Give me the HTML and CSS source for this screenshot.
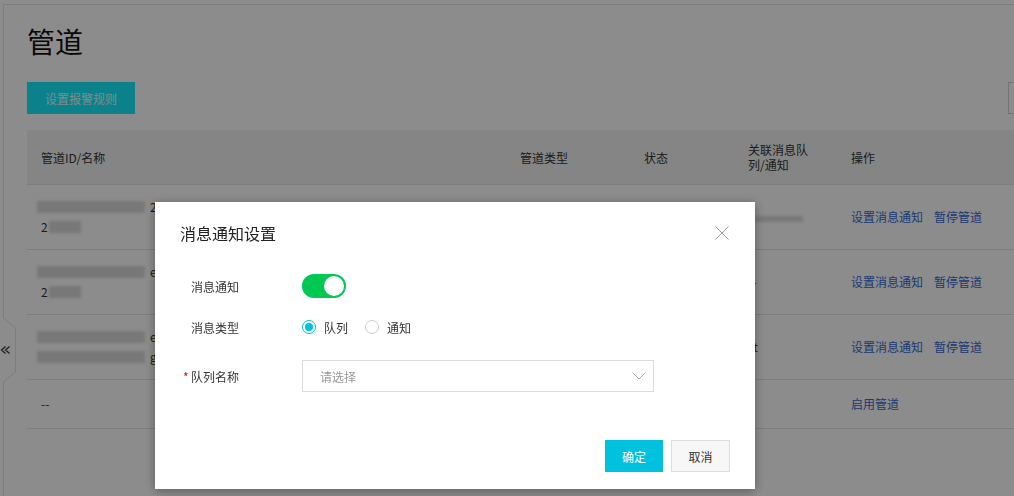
FILE: index.html
```html
<!DOCTYPE html>
<html lang="zh-CN">
<head>
  <meta charset="UTF-8" />
  <title>管道</title>
  <meta name="viewport" content="width=device-width, initial-scale=1.0" />
  <link rel="stylesheet" href="styles.css">
</head>
<body>
<div class="page">
  <svg class="collapse-tab" width="16" height="64" viewBox="0 0 16 64">
    <path d="M0 0 L3.5 0 L15.5 10 L15.5 54 L3.5 64 L0 64 Z" fill="#fff"/>
    <path d="M3.5 0 L15.5 10 L15.5 54 L3.5 64" fill="none" stroke="#e3e3e3"/>
    <path d="M5.5 28.5 L1.5 32 L5.5 35.5 M9.5 28.5 L5.5 32 L9.5 35.5" fill="none" stroke="#333" stroke-width="1.2"/>
  </svg>

  <div class="main">
    <h1 class="title">管道</h1>
    <div class="toolbar">
      <button class="btn btn-primary">设置报警规则</button>
      <button class="btn btn-ghost"></button>
    </div>

    <table class="grid">
      <colgroup>
        <col class="c-name">
        <col class="c-type">
        <col class="c-state">
        <col class="c-queue">
        <col class="c-ops">
      </colgroup>
      <thead>
        <tr>
          <th>管道ID/名称</th>
          <th>管道类型</th>
          <th>状态</th>
          <th class="th-wrap">关联消息队列/通知</th>
          <th>操作</th>
        </tr>
      </thead>
      <tbody>
        <tr class="tall">
          <td>
            <div class="line"><span class="smudge s-long"></span><span class="peek">2</span></div>
            <div class="line"><span>2</span><span class="smudge s-short"></span></div>
          </td>
          <td></td>
          <td></td>
          <td><span class="smudge s-queue"></span></td>
          <td><a class="op">设置消息通知</a><a class="op">暂停管道</a></td>
        </tr>
        <tr class="tall">
          <td>
            <div class="line"><span class="smudge s-long"></span><span class="peek">ef</span></div>
            <div class="line"><span>2</span><span class="smudge s-short"></span></div>
          </td>
          <td></td>
          <td></td>
          <td>--</td>
          <td><a class="op">设置消息通知</a><a class="op">暂停管道</a></td>
        </tr>
        <tr class="tall">
          <td>
            <div class="line"><span class="smudge s-long"></span><span class="peek">e</span></div>
            <div class="line"><span class="smudge s-long"></span><span class="peek">g</span></div>
          </td>
          <td></td>
          <td></td>
          <td>st</td>
          <td><a class="op">设置消息通知</a><a class="op">暂停管道</a></td>
        </tr>
        <tr class="short">
          <td>--</td>
          <td></td>
          <td></td>
          <td></td>
          <td><a class="op">启用管道</a></td>
        </tr>
      </tbody>
    </table>
  </div>
</div>

<div class="mask"></div>

<div class="dialog">
  <div class="dialog-head">
    <span class="dialog-title">消息通知设置</span>
    <svg class="close" width="14" height="14" viewBox="0 0 14 14">
      <path d="M0.5 0.5 L13.5 13.5 M13.5 0.5 L0.5 13.5" stroke="#999" stroke-width="1" fill="none"/>
    </svg>
  </div>
  <div class="dialog-body">
    <div class="form-item">
      <label class="form-label">消息通知</label>
      <span class="switch on"></span>
    </div>
    <div class="form-item">
      <label class="form-label">消息类型</label>
      <span class="radio checked"></span><span class="radio-text">队列</span>
      <span class="radio"></span><span class="radio-text">通知</span>
    </div>
    <div class="form-item form-select">
      <label class="form-label"><i class="req">*</i>队列名称</label>
      <div class="select">
        <span class="placeholder">请选择</span>
        <svg width="14" height="8" viewBox="0 0 14 8">
          <path d="M0.5 0.5 L7 7 L13.5 0.5" stroke="#aaa" stroke-width="1" fill="none"/>
        </svg>
      </div>
    </div>
  </div>
  <div class="dialog-foot">
    <button class="btn btn-ok">确定</button>
    <button class="btn btn-cancel">取消</button>
  </div>
</div>
</body>
</html>
```

FILE: styles.css
```css
body {
  margin: 0;
  font-family: "Noto Sans CJK SC", "Noto Sans", sans-serif;
  font-size: 12px;
  color: #333;
  background-color: #fff;
  overflow: hidden;
}

.page {
  position: relative;
  height: 100vh;
  padding: 4px 0 0 3px;
  box-sizing: border-box;
}
.main {
  height: 100%;
  box-sizing: border-box;
  border-top: 1px solid #e3e3e3;
  border-left: 1px solid #e3e3e3;
  padding-left: 23px;
  overflow: hidden;
}
.collapse-tab {
  position: absolute;
  left: 0;
  top: 318px;
}

.title {
  margin: 0;
  padding-top: 16px;
  font-size: 28px;
  font-weight: 400;
  line-height: 40px;
  color: #111;
}
.toolbar {
  display: flex;
  justify-content: space-between;
  margin-top: 21px;
}

.btn {
  height: 32px;
  border: 0;
  padding: 0 17px;
  font-family: inherit;
  font-size: 12px;
  cursor: pointer;
}
.btn-primary {
  padding: 0 18px;
  background-color: #14ecff;
  color: #e4ffff;
}
.btn-ghost {
  width: 40px;
  margin-right: -34px;
  border: 1px solid #d6d6d6;
  background-color: #fff;
}

.grid {
  margin-top: 16px;
  width: 1100px;
  border-collapse: collapse;
  table-layout: fixed;
}
.c-name { width: 479px; }
.c-type { width: 124px; }
.c-state { width: 104px; }
.c-queue { width: 103px; }
.grid th {
  height: 54px;
  padding: 0 14px;
  background-color: #f3f3f3;
  border-bottom: 1px solid #e3e3e3;
  font-weight: 400;
  text-align: left;
  line-height: 15px;
}
.grid th.th-wrap {
  padding-right: 24px;
}
.grid td {
  padding: 0 14px;
  border-bottom: 1px solid #e3e3e3;
  vertical-align: middle;
  line-height: 20px;
  white-space: nowrap;
}
.grid tr.tall td { height: 64px; }
.grid tr.short td { height: 48px; }

.line {
  display: flex;
  align-items: center;
  height: 20px;
}
.smudge {
  display: inline-block;
  height: 12px;
  background-color: #dadada;
  filter: blur(1.5px);
  vertical-align: middle;
}
.s-long { width: 108px; margin-left: -4px; }
.s-short { width: 32px; margin-left: 1px; }
.s-queue { width: 48px; height: 6px; margin-left: 7px; }
.peek { margin-left: 5px; }

.op {
  color: #3468d0;
  margin-right: 11px;
}

.mask {
  position: fixed;
  top: 0;
  left: 0;
  right: 0;
  bottom: 0;
  background-color: rgba(0, 0, 0, 0.45);
}

.dialog {
  position: fixed;
  left: 155px;
  top: 202px;
  width: 600px;
  background-color: #fff;
  box-shadow: 0 2px 10px rgba(0, 0, 0, 0.35);
}
.dialog-head {
  display: flex;
  justify-content: space-between;
  align-items: center;
  height: 22px;
  padding: 20px 26px 0 25px;
}
.dialog-title {
  font-size: 16px;
  line-height: 22px;
  color: #222;
}
.dialog-body {
  padding: 30px 0 0 28px;
}
.form-item {
  display: flex;
  align-items: center;
  min-height: 24px;
  margin-bottom: 17px;
}
.form-item.form-select {
  margin-top: 21px;
  margin-bottom: 0;
}
.form-label {
  width: 119px;
  padding-left: 8px;
  box-sizing: border-box;
  color: #333;
}
.req {
  display: inline-block;
  width: 8px;
  margin-left: -8px;
  font-style: normal;
  color: #e00;
}

.switch {
  position: relative;
  width: 44px;
  height: 24px;
  border-radius: 12px;
  background-color: #ccc;
}
.switch.on {
  background-color: #00c853;
}
.switch::after {
  content: "";
  position: absolute;
  top: 2px;
  left: 2px;
  width: 20px;
  height: 20px;
  border-radius: 50%;
  background-color: #fff;
}
.switch.on::after {
  left: auto;
  right: 2px;
}

.radio {
  position: relative;
  width: 14px;
  height: 14px;
  box-sizing: border-box;
  border: 1px solid #ccc;
  border-radius: 50%;
}
.radio.checked {
  border-color: #00c1de;
}
.radio.checked::after {
  content: "";
  position: absolute;
  top: 2px;
  left: 2px;
  width: 8px;
  height: 8px;
  border-radius: 50%;
  background-color: #00c1de;
}
.radio-text {
  margin: 0 17px 0 8px;
}

.select {
  display: flex;
  justify-content: space-between;
  align-items: center;
  width: 352px;
  height: 32px;
  box-sizing: border-box;
  border: 1px solid #dcdcdc;
  padding: 0 7px 0 17px;
}
.placeholder {
  color: #999;
}

.dialog-foot {
  display: flex;
  justify-content: flex-end;
  gap: 8px;
  padding: 48px 25px 17px;
}
.btn-ok {
  width: 58px;
  padding: 0;
  background-color: #00c1de;
  color: #fff;
}
.btn-cancel {
  width: 59px;
  padding: 0;
  background-color: #f7f7f7;
  border: 1px solid #ddd;
  color: #333;
}
```
